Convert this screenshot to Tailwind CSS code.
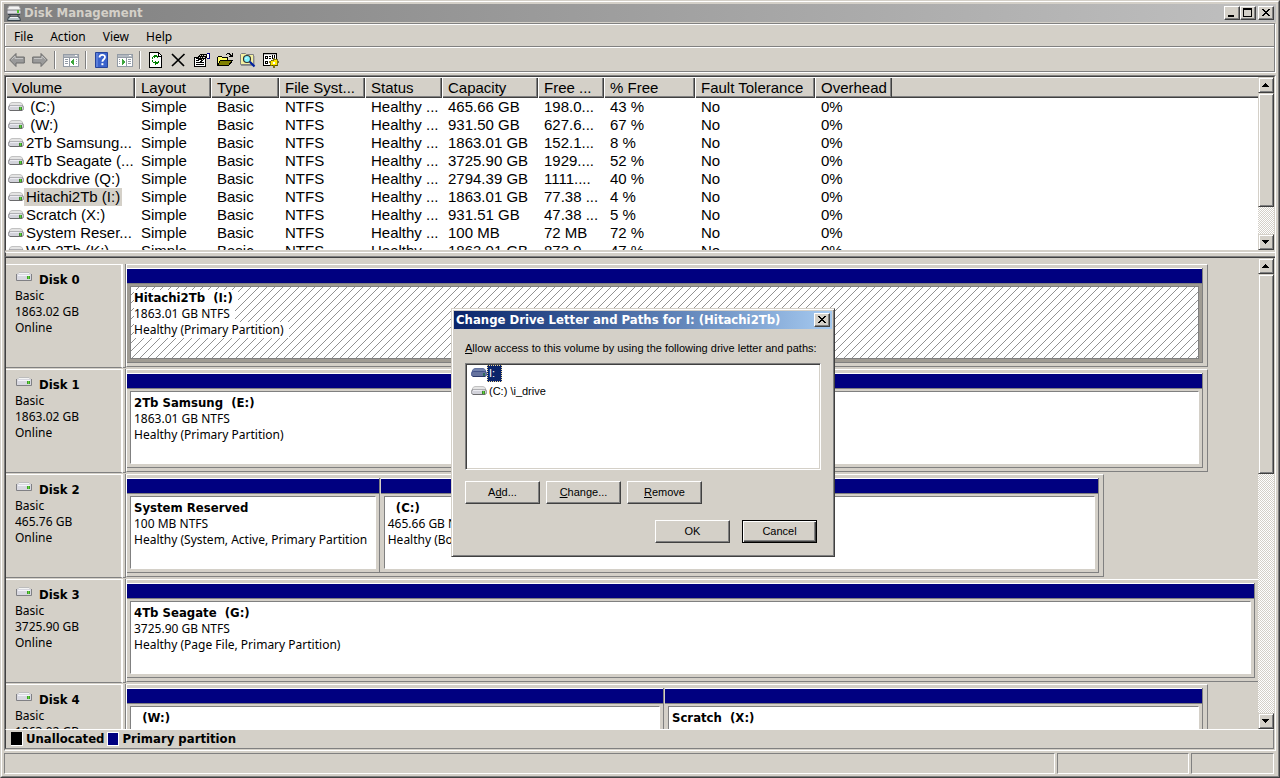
<!DOCTYPE html>
<html lang="en">
<head>
    <meta charset="UTF-8">
    <meta name="viewport" content="width=device-width, initial-scale=1.0">
    <title>Disk Management</title>
    <script src="https://cdn.jsdelivr.net/npm/@tailwindcss/browser@4"></script>
</head>
<body class="bg-[#d4d0c8] text-black font-['Noto_Sans',sans-serif] text-[12px] leading-4">

    <!-- Shared drive icons and the hatch of the selected partition -->
    <svg class="absolute w-0 h-0">
        <symbol id="drive" viewBox="0 0 16 10">
            <path d="M4 .5h8q2 0 3 3H1q1-3 3-3z" fill="#e4e4e4" stroke="#c2c2c2" />
            <rect x=".5" y="3.500" width="15" height="5" rx="2" fill="#d2d2da" stroke="#8c8c90" />
            <path d="M2 8.500h12" stroke="#6a6a6c" />
            <path d="M2 4.500h9" stroke="#ececf2" />
            <path d="M2 3.500h12" stroke="#b0b0b4" />
            <rect x="11" y="5" width="3" height="3" fill="#3f8a2c" />
            <rect x="12" y="5" width="1" height="3" fill="#58d038" />
        </symbol>
        <symbol id="drive-selected" viewBox="0 0 16 10">
            <path d="M4 .5h8q2 0 3 3H1q1-3 3-3z" fill="#7584ae" stroke="#6473a0" />
            <rect x=".5" y="3.500" width="15" height="5" rx="2" fill="#66739f" stroke="#44538a" />
            <path d="M2 8.500h12" stroke="#2b3868" />
            <rect x="12" y="5" width="2" height="3" fill="#2f6a5c" />
        </symbol>
        <symbol id="drive-box" viewBox="0 0 16 10">
            <path d="M3 .5h10l2 2H1z" fill="#f4f4f4" stroke="#bcbcbc" />
            <path d="M.5 2v6.500h15V2" fill="#d8d8e0" stroke="#808084" />
            <path d="M2 3.500h12" stroke="#f4f4f8" />
            <rect x="11" y="4" width="3" height="3" fill="#3f9a2c" />
            <rect x="12" y="4" width="1" height="3" fill="#62dc38" />
        </symbol>
        <pattern id="hatch" width="8" height="8" patternUnits="userSpaceOnUse">
            <path d="M7 0h1v1H7zM6 1h1v1H6zM5 2h1v1H5zM4 3h1v1H4zM3 4h1v1H3zM2 5h1v1H2zM1 6h1v1H1zM0 7h1v1H0z" fill="#929292" />
        </pattern>
    </svg>

    <div class="h-screen flex flex-col overflow-hidden border border-t-[#d4d0c8] border-l-[#d4d0c8] border-r-[#404040] border-b-[#404040]">
        <div class="flex-1 min-h-0 flex flex-col border border-t-white border-l-white border-r-[#808080] border-b-[#808080] p-[2px]">

            <!-- Title bar -->
            <header class="flex-none h-[18px] flex items-center pr-[2px] bg-linear-to-r from-[#808080] to-[#c0c0c0]">
                <svg class="w-4 h-4 ml-[2px]" viewBox="0 0 16 16">
                    <path d="M3 1h10l2 4v4H1V5z" fill="#f2f2f2" stroke="#a0a0a0" stroke-width=".8" />
                    <rect x="1" y="5" width="14" height="4" fill="#dcdce4" stroke="#66666a" stroke-width=".8" />
                    <rect x="11" y="5" width="2" height="3" fill="#4fc42e" />
                    <path d="M2 9.500h12M4 10v2M12 10v2" stroke="#38444c" />
                    <path d="M2.500 12h11l1 3.500h-13z" fill="#b4c0c6" stroke="#38444c" />
                    <path d="M4 12.500h8" stroke="#f0f4f6" />
                </svg>
                <h1 class="flex-1 ml-[2px] text-[13px] font-bold text-[#d4d0c8] font-['DejaVu_Sans_Condensed',sans-serif]">Disk Management</h1>
                <button aria-label="Minimize" class="w-4 h-[14px] bg-[#d4d0c8] border border-t-white border-l-white border-r-[#404040] border-b-[#404040] shadow-[inset_-1px_-1px_0_#808080]">
                    <svg class="block w-[14px] h-3" viewBox="0 0 14 12" shape-rendering="crispEdges"><path d="M3 8h6v2H3z" /></svg>
                </button>
                <button aria-label="Maximize" class="w-4 h-[14px] bg-[#d4d0c8] border border-t-white border-l-white border-r-[#404040] border-b-[#404040] shadow-[inset_-1px_-1px_0_#808080]">
                    <svg class="block w-[14px] h-3" viewBox="0 0 14 12" shape-rendering="crispEdges"><path d="M2 1h9v9H2zM3 3v6h7V3z" fill-rule="evenodd" /></svg>
                </button>
                <button aria-label="Close" class="w-4 h-[14px] ml-[2px] bg-[#d4d0c8] border border-t-white border-l-white border-r-[#404040] border-b-[#404040] shadow-[inset_-1px_-1px_0_#808080]">
                    <svg class="block w-[14px] h-3" viewBox="0 0 14 12" shape-rendering="crispEdges"><path d="M3 2h2v1h1v1h2V3h1V2h2v1h-1v1H9v1H8v1h1v1h1v1h1v1H9V8H8V7H6v1H5v1H3V8h1V7h1V6h1V5H5V4H4V3H3z" /></svg>
                </button>
            </header>

            <!-- Menu and toolbar -->
            <div class="flex-none mt-px mr-px mb-px border border-[#808080] shadow-[1px_1px_0_#fff,inset_1px_1px_0_#fff]">
                <nav class="h-[23px] flex items-center gap-px border-b border-[#808080] pl-px pt-[3px]">
                    <button class="px-2">File</button>
                    <button class="px-2">Action</button>
                    <button class="px-2">View</button>
                    <button class="px-2">Help</button>
                </nav>
                <div class="h-6 flex items-center border-t border-white">
                    <button aria-label="Back" class="w-[23px] flex justify-center">
                        <svg class="w-4 h-4" viewBox="0 0 16 16"><path d="M.7 8L7 1.500v3.500h8.300v6H7v3.500z" fill="#9a9a9a" stroke="#6c6c6c" /><path d="M2.500 7.500L6 4V6.500h8" fill="none" stroke="#c4c4c4" /></svg>
                    </button>
                    <button aria-label="Forward" class="w-[23px] flex justify-center">
                        <svg class="w-4 h-4" viewBox="0 0 16 16"><path d="M15.300 8L9 1.500v3.500H.7v6H9v3.500z" fill="#9a9a9a" stroke="#6c6c6c" /><path d="M2 6.500h8V4L13.500 7.500" fill="none" stroke="#c4c4c4" /></svg>
                    </button>
                    <div class="w-2 h-[18px] flex justify-center"><div class="w-[2px] border-l border-[#808080] bg-white"></div></div>
                    <button aria-label="Console tree" class="w-[23px] flex justify-center">
                        <svg class="w-4 h-4" viewBox="0 0 16 16" shape-rendering="crispEdges">
                            <path d="M0 2h16v13H0z" fill="#949ca6" /><path d="M1 3h14v2H1z" fill="#b4b9c0" /><path d="M12 3h2v1h-2z" fill="#fff" />
                            <path d="M1 6h5v8H1zM7 6h8v8H7z" fill="#fff" /><path d="M2 7h3v1H2zM2 9h3v1H2zM2 11h3v1H2zM13 7h1v1h-1zM13 9h1v1h-1zM13 11h1v1h-1z" fill="#949ca6" />
                            <path d="M11 7v6h-1v-1H9v-1H8V9h1V8h1V7z" fill="#3da63a" />
                        </svg>
                    </button>
                    <div class="w-2 h-[18px] flex justify-center"><div class="w-[2px] border-l border-[#808080] bg-white"></div></div>
                    <button aria-label="Help topics" class="w-[23px] flex justify-center">
                        <svg class="w-4 h-4" viewBox="0 0 16 16">
                            <path d="M1.500.5h12v15h-12z" fill="#3a62cc" stroke="#26449a" /><path d="M3 1v14" stroke="#7c9ae8" />
                            <path d="M5.500 5.500C5.500 2 11 2 11 5.200c0 2-2.600 2.200-2.600 4.600" fill="none" stroke="#fff" stroke-width="1.800" /><path d="M7.400 11.200h2v2h-2z" fill="#fff" />
                        </svg>
                    </button>
                    <button aria-label="Action pane" class="w-[23px] flex justify-center">
                        <svg class="w-4 h-4" viewBox="0 0 16 16" shape-rendering="crispEdges">
                            <path d="M0 2h16v13H0z" fill="#949ca6" /><path d="M1 3h14v2H1z" fill="#b4b9c0" /><path d="M12 3h2v1h-2z" fill="#fff" />
                            <path d="M1 6h8v8H1zM10 6h5v8h-5z" fill="#fff" /><path d="M2 7h1v1H2zM2 9h1v1H2zM2 11h1v1H2zM11 7h3v1h-3zM11 9h3v1h-3zM11 11h3v1h-3z" fill="#949ca6" />
                            <path d="M5 7h1v1h1v1h1v2H7v1H6v1H5z" fill="#3da63a" />
                        </svg>
                    </button>
                    <div class="w-2 h-[18px] flex justify-center"><div class="w-[2px] border-l border-[#808080] bg-white"></div></div>
                    <button aria-label="Refresh" class="w-[23px] flex justify-center">
                        <svg class="w-4 h-4" viewBox="0 0 16 16" shape-rendering="crispEdges">
                            <path d="M1.500.5h9l3 3v12h-12z" fill="#fff" stroke="#000" /><path d="M10.500 1v3h3" fill="none" stroke="#000" />
                            <path d="M7 2v1h2v1h1v2H9V5H7v1H6V5H5v2H4V5h1V4h1V3h0V3h1zM8 13v-1h2v-1h1V9h-1v1H8V9H7v1H5V8H4v2h1v1h2v2z" fill="#008000" />
                        </svg>
                    </button>
                    <button aria-label="Delete" class="w-[23px] flex justify-center">
                        <svg class="w-4 h-4" viewBox="0 0 16 16"><path d="M1 2l12 12M13.500 2L1 14" stroke="#000" stroke-width="1.700" /></svg>
                    </button>
                    <button aria-label="Properties" class="w-[23px] flex justify-center">
                        <svg class="w-4 h-4" viewBox="0 0 16 16" shape-rendering="crispEdges">
                            <path d="M.5 5.500h11v9H.5z" fill="#fff" stroke="#000" /><path d="M2 10.500h8M2 12.500h8M2 8.500h3" stroke="#000" />
                            <path d="M2 6h1V5h1V4h1V3h1V2h7v4h-2v1h-1v1H9v1H8v1H6V9h1V8H4V7H2z" /><path d="M6 3h1v1H6zM8 3h1v1H8zM10 3h2v1h-2zM5 5h1v1H5zM7 5h1v1H7zM9 5h2v1H9zM8 7h1v1H8z" fill="#d4d0c8" />
                            <path d="M13 1h3v6h-3z" fill="#000080" /><path d="M13 2h2v4h-2z" fill="#fff" />
                        </svg>
                    </button>
                    <button aria-label="Open" class="w-[23px] flex justify-center">
                        <svg class="w-4 h-4" viewBox="0 0 16 16" shape-rendering="crispEdges">
                            <path d="M.5 13.500v-8l1-1h3l1 1h5v3" fill="#ffff66" stroke="#000" /><path d="M.5 13.500l3-5h12l-4 5z" fill="#808000" stroke="#000" />
                            <path d="M9 2h1V1h3v1h1v1h1V1h1v4h-4V4h1V3h-1V2h-2v1H9z" />
                        </svg>
                    </button>
                    <button aria-label="Find" class="w-[23px] flex justify-center">
                        <svg class="w-4 h-4" viewBox="0 0 16 16">
                            <path d="M.5 12.500v-10l1-1h4l1 1h7v10z" fill="#f4f0a0" stroke="#808080" /><path d="M1 13.500h13V4" fill="none" stroke="#909090" />
                            <circle cx="7" cy="7" r="3.500" fill="#80f4ff" stroke="#303030" stroke-width="1.200" /><path d="M5.500 7L7 5.500" stroke="#fff" /><path d="M9.800 9.800l4.700 4.700" stroke="#0020a0" stroke-width="2.200" />
                        </svg>
                    </button>
                    <button aria-label="Settings" class="w-[23px] flex justify-center">
                        <svg class="w-4 h-4" viewBox="0 0 16 16" shape-rendering="crispEdges">
                            <path d="M.5 1.500h13v12H.5z" fill="#fff" stroke="#000" /><path d="M1 2h12v1H1z" fill="#c0c0c0" />
                            <path d="M2 4h3v3H2zM2 9h3v3H2zM6 4h2v1H6zM6 6h2v1H6zM9 3h1v4H9zM11 3h1v3h-1z" /><path d="M3 5h1v1H3zM3 10h1v1H3z" fill="#fff" />
                            <path d="M11 6l1 2 2-1v2l2 1-2 1 1 3-3-1-1 3-1-3-3 1 1-3-2-1 2-1V8l2 1z" fill="#ffe800" stroke="#605800" stroke-width=".8" /><path d="M10 10h2v2h-2z" fill="#fff" />
                        </svg>
                    </button>
                </div>
            </div>

            <!-- Panes -->
            <main class="flex-1 min-h-0 mt-[2px] flex flex-col border border-t-[#808080] border-l-[#808080] border-r-white border-b-white">
                <!-- Volume list -->
                <section class="flex-none h-[175px] flex border border-t-[#404040] border-l-[#404040] border-r-[#d4d0c8] border-b-[#d4d0c8]">
                    <div class="flex-1 min-w-0 overflow-hidden bg-white">
                        <table class="w-full table-fixed border-collapse font-['Liberation_Sans',Arial,sans-serif] text-[15px] leading-[18px]">
                            <colgroup>
                                <col class="w-[129px]"><col class="w-[76px]"><col class="w-[68px]"><col class="w-[86px]"><col class="w-[77px]"><col class="w-[96px]"><col class="w-[66px]"><col class="w-[91px]"><col class="w-[120px]"><col class="w-[77px]"><col>
                            </colgroup>
                            <thead><tr id="volume-head"></tr></thead>
                            <tbody id="volume-body"></tbody>
                        </table>
                    </div>
                    <div class="flex-none w-4 flex flex-col bg-[repeating-conic-gradient(#fff_0_25%,#d4d0c8_0_50%)] bg-[length:2px_2px]">
                        <button aria-label="Scroll volumes up" class="h-4 bg-[#d4d0c8] border border-t-[#d4d0c8] border-l-[#d4d0c8] border-r-[#404040] border-b-[#404040] shadow-[inset_1px_1px_0_#fff,inset_-1px_-1px_0_#808080]">
                            <svg class="block w-[14px] h-[14px]" viewBox="0 0 14 14" shape-rendering="crispEdges"><path d="M6 5h1v1h1v1h1v1h1v1H3V8h1V7h1V6h1z" /></svg>
                        </button>
                        <div class="h-[114px] bg-[#d4d0c8] border border-t-[#d4d0c8] border-l-[#d4d0c8] border-r-[#404040] border-b-[#404040] shadow-[inset_1px_1px_0_#fff,inset_-1px_-1px_0_#808080]"></div>
                        <button aria-label="Scroll volumes down" class="mt-auto h-4 bg-[#d4d0c8] border border-t-[#d4d0c8] border-l-[#d4d0c8] border-r-[#404040] border-b-[#404040] shadow-[inset_1px_1px_0_#fff,inset_-1px_-1px_0_#808080]">
                            <svg class="block w-[14px] h-[14px]" viewBox="0 0 14 14" shape-rendering="crispEdges"><path d="M3 5h7v1H9v1H8v1H7v1H6V8H5V7H4V6H3z" /></svg>
                        </button>
                    </div>
                </section>

                <!-- Splitter -->
                <div class="flex-none h-[5px] mt-px border-t border-t-white border-b border-b-[#808080] border-l border-l-[#404040]"></div>

                <!-- Graphical view -->
                <section class="flex-1 min-h-0 flex border-t border-l border-[#404040]">
                    <div id="disks" class="flex-1 min-w-0 overflow-hidden pt-[6px]"></div>
                    <div class="flex-none w-4 mr-px flex flex-col bg-[repeating-conic-gradient(#fff_0_25%,#d4d0c8_0_50%)] bg-[length:2px_2px]">
                        <button aria-label="Scroll disks up" class="h-4 bg-[#d4d0c8] border border-t-[#d4d0c8] border-l-[#d4d0c8] border-r-[#404040] border-b-[#404040] shadow-[inset_1px_1px_0_#fff,inset_-1px_-1px_0_#808080]">
                            <svg class="block w-[14px] h-[14px]" viewBox="0 0 14 14" shape-rendering="crispEdges"><path d="M6 5h1v1h1v1h1v1h1v1H3V8h1V7h1V6h1z" /></svg>
                        </button>
                        <div class="h-[200px] bg-[#d4d0c8] border border-t-[#d4d0c8] border-l-[#d4d0c8] border-r-[#404040] border-b-[#404040] shadow-[inset_1px_1px_0_#fff,inset_-1px_-1px_0_#808080]"></div>
                        <button aria-label="Scroll disks down" class="mt-auto h-4 bg-[#d4d0c8] border border-t-[#d4d0c8] border-l-[#d4d0c8] border-r-[#404040] border-b-[#404040] shadow-[inset_1px_1px_0_#fff,inset_-1px_-1px_0_#808080]">
                            <svg class="block w-[14px] h-[14px]" viewBox="0 0 14 14" shape-rendering="crispEdges"><path d="M3 5h7v1H9v1H8v1H7v1H6V8H5V7H4V6H3z" /></svg>
                        </button>
                    </div>
                </section>

                <!-- Legend -->
                <div class="flex-none h-5 mr-px mb-px flex items-center pl-[5px] border border-t-white border-l-[#404040] border-r-[#808080] border-b-[#808080] text-[13px] font-bold font-['DejaVu_Sans_Condensed',sans-serif]">
                    <span class="w-3 h-[14px] bg-black border-r border-b border-white"></span>
                    <span class="ml-[3px] mr-[3px]">Unallocated</span>
                    <span class="w-3 h-[14px] bg-[#000080] border border-white"></span>
                    <span class="ml-[3px]">Primary partition</span>
                </div>
            </main>

            <!-- Status bar -->
            <footer class="flex-none h-[21px] mt-[2px] mr-[2px] flex gap-[2px]">
                <div class="flex-1 border border-t-[#808080] border-l-[#808080] border-r-white border-b-white"></div>
                <div class="w-[132px] border border-t-[#808080] border-l-[#808080] border-r-white border-b-white"></div>
                <div class="w-[83px] border border-t-[#808080] border-l-[#808080] border-r-white border-b-white"></div>
            </footer>
        </div>
    </div>

    <!-- Change drive letter dialog -->
    <div role="dialog" aria-labelledby="dialog-title" class="absolute left-[451px] top-[308px] w-[384px] bg-[#d4d0c8] border border-t-[#d4d0c8] border-l-[#d4d0c8] border-r-[#404040] border-b-[#404040] shadow-[inset_1px_1px_0_#fff,inset_-1px_-1px_0_#808080] p-[2px] font-['Liberation_Sans',Arial,sans-serif] text-[11px]">
        <div class="h-[18px] flex items-center pl-[2px] pr-[2px] bg-linear-to-r from-[#0a246a] to-[#a6caf0]">
            <h2 id="dialog-title" class="flex-1 whitespace-nowrap text-[13px] font-bold text-white font-['DejaVu_Sans_Condensed',sans-serif]">Change Drive Letter and Paths for I: (Hitachi2Tb)</h2>
            <button aria-label="Close dialog" class="w-4 h-[14px] bg-[#d4d0c8] border border-t-white border-l-white border-r-[#404040] border-b-[#404040] shadow-[inset_-1px_-1px_0_#808080]">
                <svg class="block w-[14px] h-3" viewBox="0 0 14 12" shape-rendering="crispEdges"><path d="M3 2h2v1h1v1h2V3h1V2h2v1h-1v1H9v1H8v1h1v1h1v1h1v1H9V8H8V7H6v1H5v1H3V8h1V7h1V6h1V5H5V4H4V3H3z" /></svg>
            </button>
        </div>
        <div class="p-[11px]">
            <p id="paths-label" class="whitespace-nowrap"><u>A</u>llow access to this volume by using the following drive letter and paths:</p>
            <ul role="listbox" aria-labelledby="paths-label" class="mt-[7px] h-[107px] bg-white border border-t-[#808080] border-l-[#808080] border-r-white border-b-white shadow-[inset_1px_1px_0_#404040,inset_-1px_-1px_0_#d4d0c8] pl-[5px] leading-[18px]">
                <li role="option" aria-selected="true" class="h-[18px] flex items-center">
                    <svg class="w-4 h-[10px]"><use href="#drive-selected" /></svg>
                    <span class="pl-px pr-[6px] h-[17px] leading-[15px] bg-[#0a246a] text-white border border-dotted border-[#f5db95]">I:</span>
                </li>
                <li role="option" aria-selected="false" class="h-[18px] flex items-center">
                    <svg class="w-4 h-[10px]"><use href="#drive" /></svg>
                    <span class="ml-[2px]">(C:) \i_drive</span>
                </li>
            </ul>
            <div class="mt-[11px] flex gap-[6px]">
                <button class="w-[75px] h-[23px] pb-[2px] border border-t-white border-l-white border-r-[#404040] border-b-[#404040] shadow-[inset_-1px_-1px_0_#808080]">A<u>d</u>d...</button>
                <button class="w-[75px] h-[23px] pb-[2px] border border-t-white border-l-white border-r-[#404040] border-b-[#404040] shadow-[inset_-1px_-1px_0_#808080]"><u>C</u>hange...</button>
                <button class="w-[75px] h-[23px] pb-[2px] border border-t-white border-l-white border-r-[#404040] border-b-[#404040] shadow-[inset_-1px_-1px_0_#808080]"><u>R</u>emove</button>
            </div>
            <div class="mt-4 pr-1 flex justify-end gap-3">
                <button class="w-[75px] h-[23px] pb-[2px] border border-t-white border-l-white border-r-[#404040] border-b-[#404040] shadow-[inset_-1px_-1px_0_#808080]">OK</button>
                <button class="w-[75px] h-[23px] pb-[2px] border border-black shadow-[inset_1px_1px_0_#fff,inset_-1px_-1px_0_#404040,inset_-2px_-2px_0_#808080]">Cancel</button>
            </div>
        </div>
    </div>

    <script>
        const columns = ['Volume', 'Layout', 'Type', 'File Syst...', 'Status', 'Capacity', 'Free ...', '% Free', 'Fault Tolerance', 'Overhead', ''];

        const volumes = [
            { name: '&nbsp;(C:)', capacity: '465.66 GB', free: '198.0...', percent: '43 %' },
            { name: '&nbsp;(W:)', capacity: '931.50 GB', free: '627.6...', percent: '67 %' },
            { name: '2Tb Samsung...', capacity: '1863.01 GB', free: '152.1...', percent: '8 %' },
            { name: '4Tb Seagate (...', capacity: '3725.90 GB', free: '1929....', percent: '52 %' },
            { name: 'dockdrive (Q:)', capacity: '2794.39 GB', free: '1111....', percent: '40 %' },
            { name: 'Hitachi2Tb (I:)', capacity: '1863.01 GB', free: '77.38 ...', percent: '4 %', selected: true },
            { name: 'Scratch (X:)', capacity: '931.51 GB', free: '47.38 ...', percent: '5 %' },
            { name: 'System Reser...', capacity: '100 MB', free: '72 MB', percent: '72 %' },
            { name: 'WD 2Tb (K:)', capacity: '1863.01 GB', free: '873.9...', percent: '47 %' }
        ];

        // width: share of the row in percent, size: share of the disk
        const disks = [
            { name: 'Disk 0', capacity: '1863.02 GB', width: 95.6, partitions: [
                { name: 'Hitachi2Tb&nbsp; (I:)', info: '1863.01 GB NTFS', status: 'Healthy (Primary Partition)', size: 100, selected: true }
            ] },
            { name: 'Disk 1', capacity: '1863.02 GB', width: 95.6, partitions: [
                { name: '2Tb Samsung&nbsp; (E:)', info: '1863.01 GB NTFS', status: 'Healthy (Primary Partition)', size: 100 }
            ] },
            { name: 'Disk 2', capacity: '465.76 GB', width: 86.4, partitions: [
                { name: 'System Reserved', info: '100 MB NTFS', status: 'Healthy (System, Active, Primary Partition', size: 26 },
                { name: '&nbsp; (C:)', info: '465.66 GB NTFS', status: 'Healthy (Boot, Crash Dump, Primary Partition)', size: 74 }
            ] },
            { name: 'Disk 3', capacity: '3725.90 GB', width: 100.2, partitions: [
                { name: '4Tb Seagate&nbsp; (G:)', info: '3725.90 GB NTFS', status: 'Healthy (Page File, Primary Partition)', size: 100 }
            ] },
            { name: 'Disk 4', capacity: '1863.02 GB', width: 95.6, partitions: [
                { name: '&nbsp; (W:)', info: '931.50 GB NTFS', status: 'Healthy (Primary Partition)', size: 49.9 },
                { name: 'Scratch&nbsp; (X:)', info: '931.51 GB NTFS', status: 'Healthy (Primary Partition)', size: 50.1 }
            ] }
        ];

        function createHeader(title) {
            return `<th class="h-[21px] p-0 pl-[6px] text-left font-normal whitespace-nowrap bg-[#d4d0c8] ${title ? 'shadow-[inset_1px_1px_0_#fff,inset_-1px_-1px_0_#404040,inset_-2px_-2px_0_#808080]' : 'shadow-[inset_0_1px_0_#fff,inset_0_-1px_0_#404040,inset_0_-2px_0_#808080]'}">${title}</th>`;
        }

        function createVolumeRow(v) {
            const cells = ['Simple', 'Basic', 'NTFS', 'Healthy ...', v.capacity, v.free, v.percent, 'No', '0%', ''];
            return `
                <tr class="h-[18px]">
                    <td class="p-0 pl-[2px]">
                        <div class="flex items-center whitespace-nowrap">
                            <svg class="flex-none w-4 h-[10px]"><use href="#drive" /></svg>
                            <span class="pl-[2px] ${v.selected ? 'bg-[#d4d0c8] pr-[2px]' : ''}">${v.name}</span>
                        </div>
                    </td>
                    ${cells.map(c => `<td class="p-0 pl-[6px] whitespace-nowrap">${c}</td>`).join('')}
                </tr>
            `;
        }

        function createPartition(p, index) {
            return `
                <div class="min-w-0 flex flex-col border-r border-[#808080] ${index ? 'pl-px' : ''}" style="width: ${p.size}%">
                    <div class="h-[15px] bg-[#000080] border-t border-t-white"></div>
                    <div class="flex-1 min-h-0 p-[3px] pt-[2px] border-t border-t-[#808080] ${p.selected ? 'bg-[#9f9b93]' : 'bg-[#d4d0c8]'}">
                        <div class="relative h-full overflow-hidden whitespace-nowrap pl-[3px] pt-[3px] bg-white border border-t-[#808080] border-l-[#808080] ${p.selected ? 'border-r-[#808080] border-b-[#808080]' : 'border-r-white border-b-white'}">
                            ${p.selected ? '<svg class="absolute inset-0 w-full h-full" shape-rendering="crispEdges"><rect width="100%" height="100%" fill="url(#hatch)" /></svg>' : ''}
                            <div class="relative"><b class="inline-block h-4 bg-white pr-[5px] text-[13px] font-['DejaVu_Sans_Condensed',sans-serif]">${p.name}</b></div>
                            <div class="relative"><span class="inline-block h-4 bg-white pr-[5px]">${p.info}</span></div>
                            <div class="relative"><span class="inline-block h-4 bg-white pr-[5px]">${p.status}</span></div>
                        </div>
                    </div>
                </div>
            `;
        }

        function createDisk(d) {
            return `
                <div class="flex h-[105px] pb-px">
                    <div class="flex-none w-[117px] h-[104px] pl-[9px] pt-[7px] border-t border-t-white border-r-2 border-r-white border-b border-b-[#808080]">
                        <div class="flex items-start">
                            <svg class="w-4 h-[10px] ml-px"><use href="#drive-box" /></svg>
                            <b class="ml-[7px] text-[13px] font-['DejaVu_Sans_Condensed',sans-serif]">${d.name}</b>
                        </div>
                        <div>Basic</div>
                        <div>${d.capacity}</div>
                        <div>Online</div>
                    </div>
                    <div class="flex-none w-[3px] border-r border-r-[#808080] border-b border-b-[#808080]"></div>
                    <div class="flex-1 min-w-0">
                        <div class="h-[103px] flex border border-t-white border-l-white border-r-[#808080] border-b-[#808080] pt-[3px] pr-1 pb-[3px]" style="width: ${d.width}%">
                            <div class="flex-1 min-w-0 flex border-b border-[#808080]">
                                ${d.partitions.map(createPartition).join('')}
                            </div>
                        </div>
                    </div>
                </div>
            `;
        }

        document.getElementById('volume-head').innerHTML = columns.map(createHeader).join('');
        document.getElementById('volume-body').innerHTML = volumes.map(createVolumeRow).join('');
        document.getElementById('disks').innerHTML = disks.map(createDisk).join('');
    </script>
</body>
</html>
